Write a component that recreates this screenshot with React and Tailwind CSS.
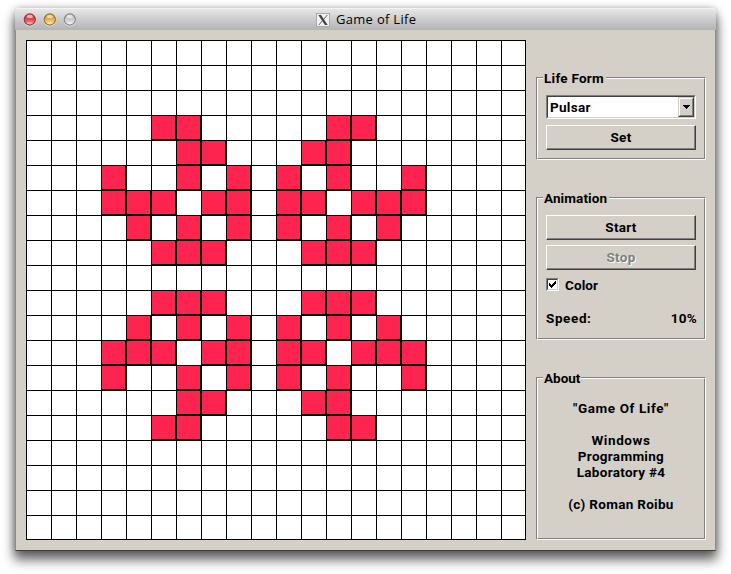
import React from "react";

// Live columns for every row of the board
const LIVE = {
  3: [5, 6, 12, 13],
  4: [6, 7, 11, 12],
  5: [3, 6, 8, 10, 12, 15],
  6: [3, 4, 5, 7, 8, 10, 11, 13, 14, 15],
  7: [4, 6, 8, 10, 12, 14],
  8: [5, 6, 7, 11, 12, 13],
  10: [5, 6, 7, 11, 12, 13],
  11: [4, 6, 8, 10, 12, 14],
  12: [3, 4, 5, 7, 8, 10, 11, 13, 14, 15],
  13: [3, 6, 8, 10, 12, 15],
  14: [6, 7, 11, 12],
  15: [5, 6, 12, 13],
};
const SIZE = Array.from({ length: 20 }, (_, i) => i);

function Cell({ row, col }) {
  const live = (LIVE[row] || []).includes(col);
  return (
    <div
      className={
        "border-l border-t border-black " +
        (live ? "bg-[#ff2350] border-r border-b" : "bg-white") +
        (col === 19 ? " border-r" : "") +
        (row === 19 ? " border-b" : "")
      }
    />
  );
}

function Board() {
  return (
    <div className="grid h-[500px] w-[500px] grid-cols-[repeat(20,25px)] grid-rows-[repeat(20,25px)]">
      {SIZE.map((r) => SIZE.map((c) => <Cell key={r + "-" + c} row={r} col={c} />))}
    </div>
  );
}

function Group({ title, titleClass, className, children }) {
  return (
    <section className={"relative w-[170px] border border-t-[#808080] border-l-[#808080] border-r-white border-b-white " + className}>
      <div className="h-full border border-t-white border-l-white border-r-[#808080] border-b-[#808080] px-2">
        {children}
      </div>
      <h2 className={"absolute -top-[8px] left-[6px] h-4 whitespace-nowrap bg-[#d4d0c8] pl-px leading-4 " + titleClass}>{title}</h2>
    </section>
  );
}

function Button({ children, disabled, className = "" }) {
  return (
    <button
      disabled={disabled}
      className={
        "block h-[25px] w-[150px] border border-t-white border-l-white border-r-[#404040] border-b-[#404040] bg-[#d4d0c8] " + className
      }
    >
      <span
        className={
          "block h-full border-r border-b border-[#808080] pl-px text-center leading-[22px] " +
          (disabled ? "text-[#808080] [text-shadow:1px_1px_0_#fff]" : "")
        }
      >
        {children}
      </span>
    </button>
  );
}

function Light({ id, edge, top, mid, low }) {
  return (
    <svg width="13" height="14" viewBox="0 0 13 14" className="block">
      <defs>
        <linearGradient id={id} x1="0" y1="0" x2="0" y2="1">
          <stop offset="0" stopColor={top} />
          <stop offset="0.5" stopColor={mid} />
          <stop offset="1" stopColor={low} />
        </linearGradient>
      </defs>
      <circle cx="6.8" cy="7.4" r="6.1" fill="#fff" opacity="0.55" />
      <circle cx="6.8" cy="6.5" r="5.6" fill={`url(#${id})`} stroke={edge} strokeWidth="1.1" />
      <ellipse cx="6.8" cy="3.4" rx="3" ry="1.7" fill="#fff" opacity="0.6" />
      <ellipse cx="6.8" cy="10" rx="3" ry="1.3" fill="#fff" opacity="0.35" />
    </svg>
  );
}

function TitleBar() {
  return (
    <header className="flex h-[22px] items-center rounded-t-[4px] border-t border-[#f4f4f4] bg-linear-to-b from-[#e6e6e6] to-[#b3b3b3] pl-2">
      <div className="flex w-[293px] gap-[7px]">
        <Light id="lr" edge="#8f3a3c" top="#b94347" mid="#e8474c" low="#ff9a9a" />
        <Light id="ly" edge="#96703a" top="#c08a3c" mid="#efb04a" low="#ffe596" />
        <Light id="lg" edge="#858585" top="#b0b0b0" mid="#cccccc" low="#ececec" />
      </div>
      <svg width="14" height="14" viewBox="0 0 14 14" className="block">
        <rect x="0.5" y="0.5" width="13" height="13" fill="#f1f1f1" stroke="#a9a9a9" />
        <path d="M2.3 2h2.8l6.6 10H8.9z" fill="#444" />
        <path d="M11.3 2L7.6 6.5M6.2 8L2.8 12" stroke="#555" strokeWidth="0.9" fill="none" />
      </svg>
      <h1 className="mb-px ml-[6px] whitespace-nowrap font-['Open_Sans','Noto_Sans',sans-serif] text-[13px] leading-5 tracking-[0.3px] text-black">
        Game of Life
      </h1>
    </header>
  );
}

export default function App() {
  return (
    <div className="h-[574px] w-[731px] overflow-hidden bg-white pl-[15px] pt-2">
      <main className="h-[543px] w-[701px] rounded-t-[5px] shadow-[0_8px_12px_1px_rgba(0,0,0,0.6),0_0_7px_rgba(0,0,0,0.25)]">
        <TitleBar />
        <div className="flex h-[521px] gap-[10px] border-x border-b border-x-[#8e8c88] border-b-[#3f3e3c] bg-[#d4d0c8] pl-[10px] pt-[10px] font-['Roboto','Liberation_Sans',sans-serif] text-[13.5px] font-bold leading-4 tracking-[0.3px] text-black">
          <Board />
          <aside className="flex flex-col pt-[37px]">
            <Group title="Life Form" className="h-[83px]" titleClass="w-[63px] tracking-[0.25px]">
              <div className="mt-4 flex h-6 w-[150px] border border-t-[#808080] border-l-[#808080] border-r-white border-b-white bg-white">
                <div className="flex flex-1 border border-t-[#404040] border-l-[#404040] border-r-[#d4d0c8] border-b-[#d4d0c8]">
                  <span className="flex-1 pl-[2px] leading-[21px]">Pulsar</span>
                  <span className="flex w-4 items-center justify-center border border-t-[#d4d0c8] border-l-[#d4d0c8] border-r-[#404040] border-b-[#404040] bg-[#d4d0c8]">
                    <span className="flex h-full w-full items-center justify-center border border-t-white border-l-white border-r-[#808080] border-b-[#808080]">
                      <svg width="7" height="4" viewBox="0 0 7 4" shapeRendering="crispEdges" className="block">
                        <path d="M0 0h7v1H0zM1 1h5v1H1zM2 2h3v1H2zM3 3h1v1H3z" />
                      </svg>
                    </span>
                  </span>
                </div>
              </div>
              <Button className="mt-[6px]">Set</Button>
            </Group>
            <Group title="Animation" className="mt-[37px] h-[143px]" titleClass="w-[66px] tracking-[0.1px]">
              <Button className="mt-4">Start</Button>
              <Button disabled className="mt-[5px]">Stop</Button>
              <label className="mt-2 flex h-[13px] items-center">
                <span className="flex h-[13px] w-[13px] border border-t-[#808080] border-l-[#808080] border-r-white border-b-white">
                  <span className="flex flex-1 items-center justify-center border border-t-[#404040] border-l-[#404040] border-r-[#d4d0c8] border-b-[#d4d0c8] bg-white">
                    <svg width="7" height="7" viewBox="0 0 7 7" shapeRendering="crispEdges" className="block">
                      <path d="M0 2h1v3H0zM1 3h1v3H1zM2 4h1v3H2zM3 3h1v3H3zM4 2h1v3H4zM5 1h1v3H5zM6 0h1v3H6z" />
                    </svg>
                  </span>
                </span>
                <span className="ml-[6px] mt-px tracking-[0.1px]">Color</span>
              </label>
              <div className="mt-[19px] flex w-[151px] justify-between">
                <span className="tracking-[0.6px]">Speed:</span>
                <span>10%</span>
              </div>
            </Group>
            <Group title="About" className="mt-[37px] h-[163px]" titleClass="w-[38px] tracking-[0px]">
              <div className="pt-[21px] text-center">
                <p className="tracking-[0.6px]">"Game Of Life"</p>
                <p className="mt-4 tracking-[0.6px]">Windows</p>
                <p>Programming</p>
                <p>Laboratory #4</p>
                <p className="mt-4">(c) Roman Roibu</p>
              </div>
            </Group>
          </aside>
        </div>
      </main>
    </div>
  );
}
